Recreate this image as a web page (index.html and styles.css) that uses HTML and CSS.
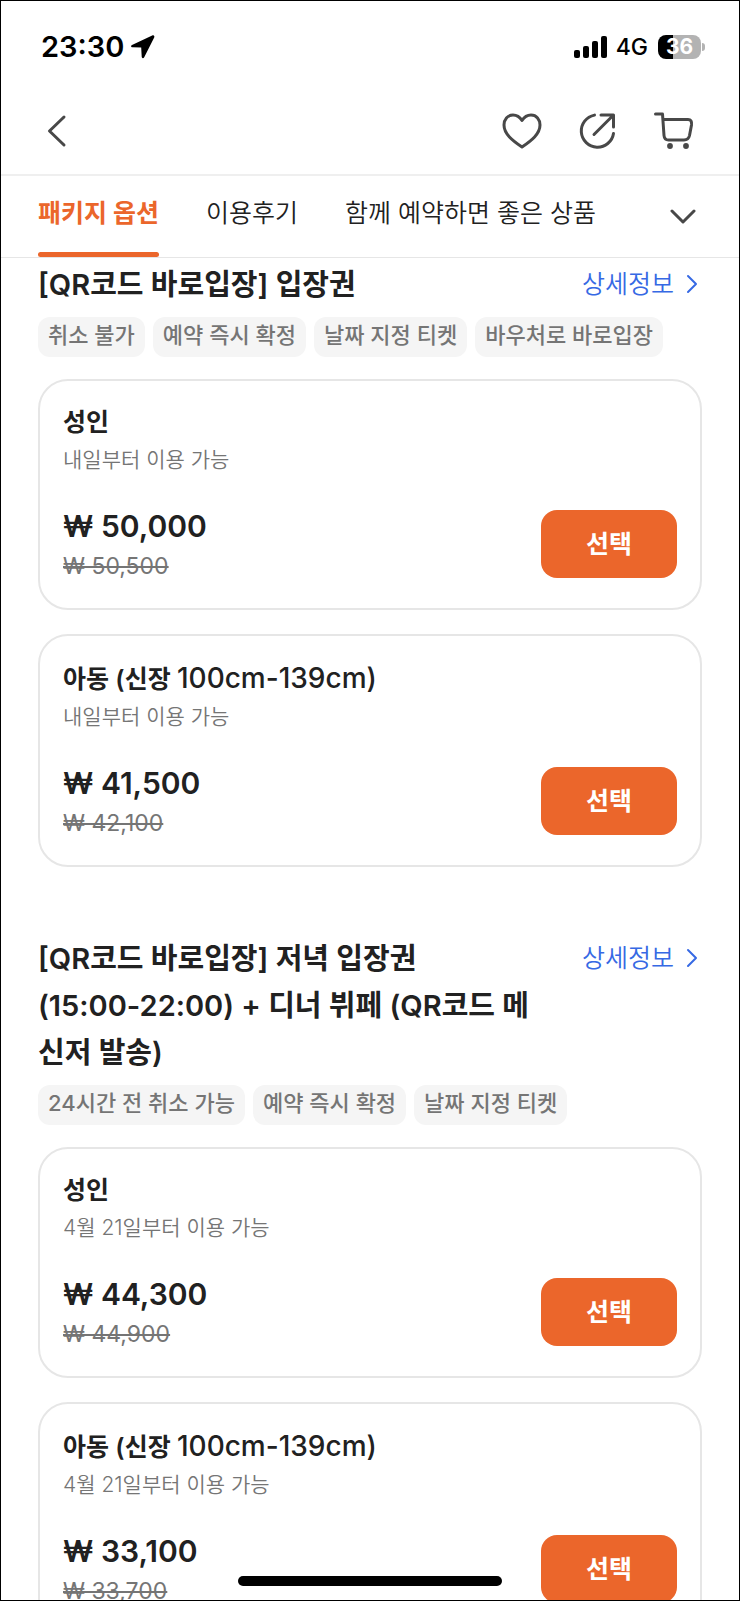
FILE: index.html
```
<!DOCTYPE html>
<html lang="ko">
<head>
<meta charset="utf-8">
<meta name="viewport" content="width=device-width, initial-scale=1">
<title>패키지 옵션</title>
<link rel="stylesheet" href="styles.css">
</head>
<body>
<div class="screen">
  <header>
    <div class="status">
      <span class="clock">23:30</span>
      <svg class="location" width="24" height="24" viewBox="0 0 24 24" aria-hidden="true"><path d="M21.200.400 1 10c-1.400.700-1.100 2.300.500 2.300l8.700.200.500 9.300c.100 1.600 1.800 1.800 2.500.400L23.200 2.400C23.800 1 22.600-.200 21.200.400Z"/></svg>
      <svg class="signal" width="33" height="22" viewBox="0 0 33 22" aria-hidden="true"><rect x="0" y="14" width="6" height="8" rx="2"/><rect x="9" y="10" width="6" height="12" rx="2"/><rect x="18" y="5" width="6" height="17" rx="2"/><rect x="27" y="0" width="6" height="22" rx="2"/></svg>
      <span class="network">4G</span>
      <span class="battery">36</span>
    </div>
    <div class="nav">
      <button class="icon-button back" aria-label="뒤로"><svg width="40" height="40" viewBox="0 0 40 40"><path d="M27 6 12.500 20 27 34"/></svg></button>
      <button class="icon-button" aria-label="찜하기"><svg width="40" height="40" viewBox="0 0 40 40"><path d="M20 9.500C17.500 5.500 14 4 11 4 5.500 4 2 8.500 2 14c0 9 8.500 15.500 18 22 9.500-6.500 18-13 18-22 0-5.500-3.500-10-9-10-3 0-6.500 1.500-9 5.500Z"/></svg></button>
      <button class="icon-button" aria-label="공유"><svg width="40" height="40" viewBox="0 0 40 40"><path d="M16.500 4.100A16.200 16.200 0 1 0 35.500 22.500M23 4h12.500v12M35 4.500 16 23.500"/></svg></button>
      <button class="icon-button" aria-label="장바구니"><svg width="40" height="40" viewBox="0 0 40 40"><path d="M1.500 3H8.500l1.500 21.500q.4 4.500 4.500 4.500h15.500q4.500 0 5.500-4.500l2-10.500Q38.200 8.500 34 8.500H9.500"/><g class="wheels"><circle cx="16" cy="35" r="2.900"/><circle cx="32" cy="35" r="2.900"/></g></svg></button>
    </div>
    <nav class="tabs">
      <a class="tab active" href="#options" aria-current="true">패키지 옵션</a>
      <a class="tab" href="#reviews">이용후기</a>
      <a class="tab" href="#related">함께 예약하면 좋은 상품</a>
      <button class="more" aria-label="메뉴 펼치기"><svg width="26" height="16" viewBox="0 0 26 16"><path d="m2 2 11 11L24 2"/></svg></button>
    </nav>
  </header>

  <main id="options">
    <section class="package">
      <div class="package-head">
        <h2>[QR코드 바로입장] 입장권</h2>
        <a class="details" href="#detail-1">상세정보<svg width="12" height="20" viewBox="0 0 12 20" aria-hidden="true"><path d="m2 2 8 8-8 8"/></svg></a>
      </div>
      <ul class="tags"><li>취소 불가</li><li>예약 즉시 확정</li><li>날짜 지정 티켓</li><li>바우처로 바로입장</li></ul>
      <div class="cards">
        <article class="card">
          <h3>성인</h3>
          <p class="date">내일부터 이용 가능</p>
          <div class="buy">
            <div><p class="price">₩ 50,000</p><s class="old">₩ 50,500</s></div>
            <button class="select">선택</button>
          </div>
        </article>
        <article class="card">
          <h3>아동 (신장 <span class="size">100cm-139cm)</span></h3>
          <p class="date">내일부터 이용 가능</p>
          <div class="buy">
            <div><p class="price">₩ 41,500</p><s class="old">₩ 42,100</s></div>
            <button class="select">선택</button>
          </div>
        </article>
      </div>
    </section>

    <section class="package">
      <div class="package-head">
        <h2>[QR코드 바로입장] 저녁 입장권 <span class="time">(15:00-22:00)</span> + 디너 뷔페 (QR코드 메신저 발송)</h2>
        <a class="details" href="#detail-2">상세정보<svg width="12" height="20" viewBox="0 0 12 20" aria-hidden="true"><path d="m2 2 8 8-8 8"/></svg></a>
      </div>
      <ul class="tags"><li>24시간 전 취소 가능</li><li>예약 즉시 확정</li><li>날짜 지정 티켓</li></ul>
      <div class="cards">
        <article class="card">
          <h3>성인</h3>
          <p class="date">4월 21일부터 이용 가능</p>
          <div class="buy">
            <div><p class="price">₩ 44,300</p><s class="old">₩ 44,900</s></div>
            <button class="select">선택</button>
          </div>
        </article>
        <article class="card">
          <h3>아동 (신장 <span class="size">100cm-139cm)</span></h3>
          <p class="date">4월 21일부터 이용 가능</p>
          <div class="buy">
            <div><p class="price">₩ 33,100</p><s class="old">₩ 33,700</s></div>
            <button class="select">선택</button>
          </div>
        </article>
      </div>
    </section>
  </main>
  <div class="home-indicator"></div>
</div>
</body>
</html>
```

FILE: styles.css
```
* { box-sizing: border-box; }

body, h2, h3, p, ul { margin: 0; padding: 0; }

body {
  background: #fff;
  color: #212121;
  font-family: Inter, "Noto Sans CJK KR", sans-serif;
}

button {
  border: 0;
  background: none;
  padding: 0;
  font-family: inherit;
  cursor: pointer;
}

a { text-decoration: none; }

svg { display: block; flex: none; }

.screen {
  position: relative;
  display: flex;
  flex-direction: column;
  height: 100vh;
  border: 1px solid #000;
  overflow: hidden;
}

header { flex: none; }

/* Status bar */
.status {
  display: flex;
  align-items: center;
  padding: 28px 38px 24px 40px;
  color: #000;
  line-height: 36px;
}

.clock { font-size: 29px; font-weight: 600; }
.location { margin-left: 7px; }
.signal { margin-left: auto; }
.network { margin: 0 10px 0 9px; font-size: 23px; font-weight: 500; }

.battery {
  position: relative;
  width: 43px;
  border-radius: 8px;
  background: linear-gradient(to right, #000 35%, #b3b3b3 35%);
  color: #fff;
  font-size: 21px;
  font-weight: 700;
  line-height: 24px;
  text-align: center;
}

.battery::after {
  content: "";
  position: absolute;
  top: 8px;
  right: -4px;
  width: 3px;
  height: 8px;
  border-radius: 0 3px 3px 0;
  background: #b3b3b3;
}

/* Navigation bar */
.nav {
  display: flex;
  align-items: center;
  gap: 36px;
  height: 87px;
  padding: 0 45px 2px 36px;
  border-bottom: 2px solid #efefef;
}

.icon-button svg {
  fill: none;
  stroke: #484848;
  stroke-width: 3;
  stroke-linecap: round;
  stroke-linejoin: round;
}

.back { margin-right: auto; }
.wheels { fill: #484848; stroke: none; }

/* Tabs */
.tabs {
  display: flex;
  align-items: stretch;
  gap: 47px;
  height: 82px;
  padding: 0 43px 0 37px;
  border-bottom: 1px solid #e6e6e6;
}

.tab {
  padding-top: 17px;
  color: #212121;
  font-size: 25px;
  font-weight: 350;
  line-height: 40px;
  white-space: nowrap;
}

.active {
  position: relative;
  color: #eb662b;
  font-weight: 700;
}

.active::after {
  content: "";
  position: absolute;
  left: 0;
  right: 0;
  bottom: 0;
  height: 5px;
  border-radius: 3px;
  background: #eb662b;
}

.more { margin-left: auto; }
.more svg { fill: none; stroke: #484848; stroke-width: 3; stroke-linecap: round; stroke-linejoin: round; }

/* Packages */
main {
  flex: 1;
  min-height: 0;
  padding: 3px 37px 0;
  overflow: hidden;
}

.package + .package { margin-top: 68px; }

.package-head {
  display: flex;
  justify-content: space-between;
  align-items: flex-start;
  gap: 28px;
}

h2 {
  font-size: 29px;
  font-weight: 600;
  line-height: 47px;
}

.time { white-space: nowrap; }

.details {
  display: flex;
  align-items: center;
  gap: 12px;
  padding-right: 4px;
  color: #3669e4;
  font-size: 25px;
  font-weight: 350;
  line-height: 46px;
  white-space: nowrap;
}

.details svg { fill: none; stroke: #3669e4; stroke-width: 2; stroke-linecap: round; stroke-linejoin: round; }

.tags {
  display: flex;
  flex-wrap: wrap;
  gap: 8px;
  margin: 9px 0 22px;
  list-style: none;
}

.tags li {
  padding: 0 10px 4px;
  border-radius: 12px;
  background: #f5f5f5;
  color: #757575;
  font-size: 22px;
  font-weight: 500;
  line-height: 36px;
}

.cards {
  display: flex;
  flex-direction: column;
  gap: 24px;
}

.card {
  padding: 21px 23px 30px;
  border: 2px solid #e6e6e6;
  border-radius: 30px;
}

h3 {
  font-size: 25px;
  font-weight: 600;
  line-height: 40px;
}

.size { font-size: 28px; font-weight: 500; line-height: 42px; }

.date {
  color: #757575;
  font-size: 21px;
  font-weight: 350;
  line-height: 36px;
}

.buy {
  display: flex;
  justify-content: space-between;
  align-items: flex-end;
  margin-top: 20px;
}

.price {
  font-size: 30px;
  font-weight: 600;
  line-height: 56px;
}

.old {
  display: block;
  color: #757575;
  font-size: 23px;
  line-height: 24px;
}

.select {
  width: 136px;
  height: 68px;
  padding-bottom: 4px;
  border-radius: 16px;
  background: #eb662b;
  color: #fff;
  font-size: 25px;
  font-weight: 700;
}

.home-indicator {
  position: absolute;
  left: 50%;
  bottom: 14px;
  width: 264px;
  height: 10px;
  border-radius: 5px;
  background: #000;
  transform: translateX(-50%);
}
```
